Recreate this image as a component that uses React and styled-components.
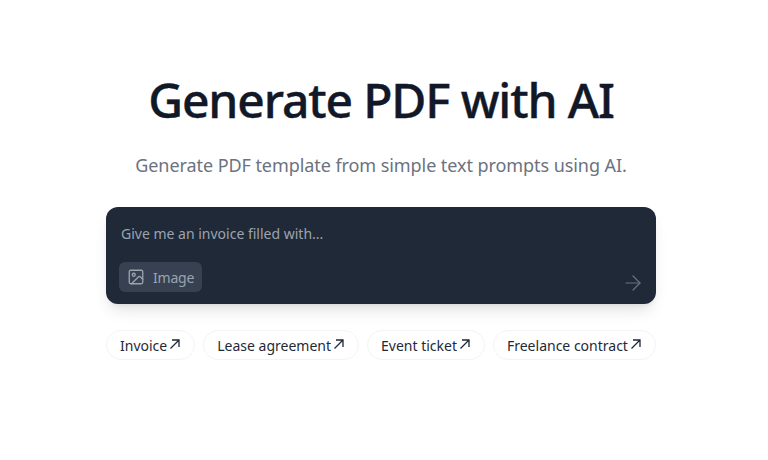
import React from 'react'
import styled, { createGlobalStyle } from 'styled-components'
import { ArrowRight, Image as ImageIcon } from 'lucide-react'

const GlobalStyle = createGlobalStyle`
  html, body { margin: 0; padding: 0; background: #fff; }
  body { font-family: "Noto Sans", "Open Sans", sans-serif; }
  * { box-sizing: border-box; }
`

const samples = ['Invoice', 'Lease agreement', 'Event ticket', 'Freelance contract']

const App = () => (
  <Page>
    <GlobalStyle />
    <Main>
      <Title>Generate PDF with AI</Title>
      <Subtitle>Generate PDF template from simple text prompts using AI.</Subtitle>
      <PromptCard>
        <Prompt placeholder="Give me an invoice filled with..." />
        <PromptFooter>
          <ImageButton>
            <ImageIcon size={18} strokeWidth={1.75} />
            Image
          </ImageButton>
          <SendButton aria-label="Send">
            <ArrowRight size={24} strokeWidth={1.2} />
          </SendButton>
        </PromptFooter>
      </PromptCard>
      <Pills>
        {samples.map((s) => (
          <Pill key={s}>
            {s}
            <PillArrow width="12" height="12" viewBox="0 0 12 12" fill="none" stroke="currentColor" strokeWidth="1.3">
              <path d="M1.5 10.5 10 2M3 2h7v7" />
            </PillArrow>
          </Pill>
        ))}
      </Pills>
    </Main>
  </Page>
)

export default App

const Page = styled.div`
  height: 460px;
  overflow: hidden;
  display: flex;
  justify-content: center;
  padding: 72px 6px 0 0;
`

const Main = styled.main`
  width: 550px;
  display: flex;
  flex-direction: column;
  align-items: center;
`

const Title = styled.h1`
  margin: 0;
  font-size: 48px;
  line-height: 56px;
  font-weight: 500;
  letter-spacing: -1.15px;
  -webkit-text-stroke: 0.4px #111827;
  color: #111827;
  white-space: nowrap;
`

const Subtitle = styled.p`
  margin: 23px 0 0;
  font-size: 18px;
  line-height: 28px;
  letter-spacing: -0.07px;
  color: #6b7280;
  white-space: nowrap;
`

const PromptCard = styled.div`
  width: 100%;
  height: 97px;
  margin-top: 28px;
  padding: 17px 11px 9px 13px;
  display: flex;
  flex-direction: column;
  justify-content: space-between;
  background: #1f2937;
  border-radius: 12px;
  box-shadow: 0 10px 15px -3px rgba(0, 0, 0, 0.1), 0 4px 6px -4px rgba(0, 0, 0, 0.1);
`

const Prompt = styled.input`
  width: 100%;
  padding: 0 2px;
  border: none;
  outline: none;
  background: transparent;
  font: inherit;
  font-size: 14px;
  line-height: 20px;
  color: #fff;

  &::placeholder {
    color: #9ca3af;
    opacity: 1;
  }
`

const PromptFooter = styled.div`
  display: flex;
  align-items: flex-end;
  justify-content: space-between;
`

const ImageButton = styled.button`
  height: 30px;
  margin-bottom: 3px;
  padding: 0 8px;
  display: flex;
  align-items: center;
  gap: 8px;
  border: none;
  border-radius: 6px;
  background: #374151;
  color: #9ca3af;
  font: inherit;
  font-size: 14px;
  letter-spacing: -0.2px;
`

const SendButton = styled.button`
  padding: 0;
  display: flex;
  border: none;
  background: transparent;
  color: #6b7280;
`

const Pills = styled.div`
  width: 100%;
  margin-top: 26px;
  display: flex;
  gap: 8px;
`

const Pill = styled.button`
  height: 30px;
  padding: 0 13px;
  display: flex;
  align-items: center;
  gap: 2px;
  border: 1px solid #f3f4f6;
  border-radius: 999px;
  background: #fff;
  color: #1f2937;
  font: inherit;
  font-size: 14px;
`

const PillArrow = styled.svg`
  margin-top: -3px;
`
